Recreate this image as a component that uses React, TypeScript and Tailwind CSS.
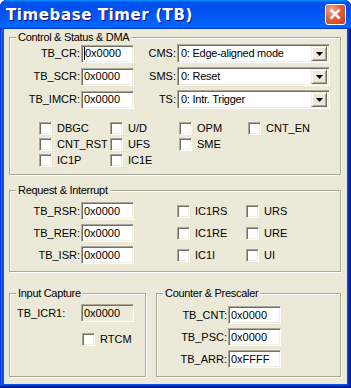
import React from "react";

const sunken =
  "border border-t-[#ACA899] border-l-[#ACA899] border-b-white border-r-white shadow-[inset_1px_1px_0_#716F64,inset_-1px_-1px_0_#F1EFE2]";

function Edit({ v, caret, disabled }: { v: string; caret?: boolean; disabled?: boolean }) {
  return (
    <div
      className={`${sunken} h-[18px] w-[53px] flex items-center pl-[2px] ${
        disabled ? "bg-[#ECE9D8]" : "bg-white"
      }`}
    >
      {caret && <span className="w-px h-[13px] bg-black" />}
      <span className="leading-none">{v}</span>
    </div>
  );
}

function Select({ v }: { v: string }) {
  return (
    <div className={`${sunken} h-[19px] w-[153px] bg-white flex items-center pl-[3px] pr-[2px]`}>
      <span className="flex-1 leading-none tracking-[-0.25px]">{v}</span>
      <div className="w-[16px] h-[15px] bg-[#ECE9D8] border border-t-[#F1EFE2] border-l-[#F1EFE2] border-b-[#716F64] border-r-[#716F64] shadow-[inset_1px_1px_0_#fff,inset_-1px_-1px_0_#ACA899] flex items-center justify-center">
        <svg width="7" height="4" viewBox="0 0 7 4">
          <path d="M0 0H7L3.5 4Z" fill="#000" />
        </svg>
      </div>
    </div>
  );
}

function Check({ label }: { label: string }) {
  return (
    <div className="flex items-center gap-[5px] h-[13px]">
      <div className={`${sunken} w-[13px] h-[13px] bg-white shrink-0`} />
      <span className="leading-none whitespace-nowrap">{label}</span>
    </div>
  );
}

function Group({
  title,
  className,
  children,
}: {
  title: string;
  className: string;
  children: React.ReactNode;
}) {
  return (
    <fieldset
      className={`m-0 min-w-0 border border-[#ACA899] shadow-[inset_1px_1px_0_#fff,1px_1px_0_#fff] ${className}`}
    >
      <legend className="ml-[6px] px-[2px] leading-[13px] bg-[#ECE9D8] tracking-[-0.3px]">{title}</legend>
      {children}
    </fieldset>
  );
}

export default function App() {
  return (
    <div
      className="w-[351px] h-[388px] flex flex-col bg-[#0054E3] rounded-t-[7px] overflow-hidden text-[11px] text-black shadow-[inset_-1px_-1px_#00138c,inset_1px_1px_#0831d9,inset_-2px_-2px_#001ea0,inset_2px_2px_#166aee,inset_-3px_-3px_#003bda,inset_3px_3px_#0855dd]"
      style={{ fontFamily: '"Liberation Sans", Arial, sans-serif' }}
    >
      <div className="h-[29px] shrink-0 flex items-center justify-between pl-[6px] pr-[5px] rounded-t-[7px] bg-[linear-gradient(180deg,#0997ff,#0053ee_8%,#0050ee_40%,#06f_88%,#06f_93%,#005bff_95%,#003dd7_96%,#003dd7)]">
        <span
          className="text-white font-bold text-[15px] tracking-[0.6px] [text-shadow:1px_1px_#0f1089] leading-none pt-[1px]"
          style={{ fontFamily: '"DejaVu Sans", Verdana, sans-serif' }}
        >
          Timebase Timer (TB)
        </span>
        <div className="w-[21px] h-[21px] rounded-[3px] border border-white bg-[radial-gradient(circle_at_30%_25%,#F4A98E_0%,#E2603C_45%,#C4401D_100%)] flex items-center justify-center">
          <svg width="21" height="21" viewBox="0 0 21 21">
            <path d="M6 6L14 14M14 6L6 14" stroke="#fff" strokeWidth="2.8" strokeLinecap="square" />
          </svg>
        </div>
      </div>

      <div className="flex-1 mx-[4px] mb-[4px] bg-[#ECE9D8] pl-[5px] pr-[6px] pt-[2px] flex flex-col">
        <Group title="Control & Status & DMA" className="px-0 pt-0 pb-[7px]">
          <div className="flex flex-col gap-[4px]">
            {[
              ["TB_CR:", "0x0000", "CMS:", "0: Edge-aligned mode"],
              ["TB_SCR:", "0x0000", "SMS:", "0: Reset"],
              ["TB_IMCR:", "0x0000", "TS:", "0: Intr. Trigger"],
            ].map((r, i) => (
              <div key={i} className="flex items-center h-[19px]">
                <span className="w-[70px] mr-[1px] text-right leading-none">{r[0]}</span>
                <Edit v={r[1]} caret={i === 0} />
                <span className="w-[42px] mr-[1px] text-right leading-none">{r[2]}</span>
                <Select v={r[3]} />
              </div>
            ))}
          </div>
          <div className="mt-[13px] pl-[29px] grid grid-cols-[71px_69px_69px_auto] gap-y-[3px]">
            <Check label="DBGC" />
            <Check label="U/D" />
            <Check label="OPM" />
            <Check label="CNT_EN" />
            <Check label="CNT_RST" />
            <Check label="UFS" />
            <Check label="SME" />
            <div />
            <Check label="IC1P" />
            <Check label="IC1E" />
          </div>
        </Group>

        <Group title="Request & Interrupt" className="mt-[9px] px-0 pt-[5px] pb-[7px]">
          <div className="flex flex-col gap-[4px]">
            {[
              ["TB_RSR:", "IC1RS", "URS"],
              ["TB_RER:", "IC1RE", "URE"],
              ["TB_ISR:", "IC1I", "UI"],
            ].map((r, i) => (
              <div key={i} className="flex items-center h-[18px]">
                <span className="w-[70px] mr-[1px] text-right leading-none">{r[0]}</span>
                <Edit v="0x0000" />
                <div className="ml-[43px] w-[69px]">
                  <Check label={r[1]} />
                </div>
                <Check label={r[2]} />
              </div>
            ))}
          </div>
        </Group>

        <div className="mt-[15px] flex gap-[10px] items-stretch">
          <Group title="Input Capture" className="w-[137px] shrink-0 px-0 pt-[4px] pb-0">
            <div className="flex items-center h-[18px] pl-[7px]">
              <span className="w-[64px] leading-none">TB_ICR1:</span>
              <Edit v="0x0000" disabled />
            </div>
            <div className="mt-[11px] ml-[72px]">
              <Check label="RTCM" />
            </div>
          </Group>
          <Group title="Counter & Prescaler" className="flex-1 px-0 pt-[6px] pb-[8px]">
            <div className="flex flex-col gap-[4px]">
              {[
                ["TB_CNT:", "0x0000"],
                ["TB_PSC:", "0x0000"],
                ["TB_ARR:", "0xFFFF"],
              ].map((r, i) => (
                <div key={i} className="flex items-center h-[18px]">
                  <span className="w-[70px] mr-[1px] text-right leading-none">{r[0]}</span>
                  <Edit v={r[1]} />
                </div>
              ))}
            </div>
          </Group>
        </div>
      </div>
    </div>
  );
}
